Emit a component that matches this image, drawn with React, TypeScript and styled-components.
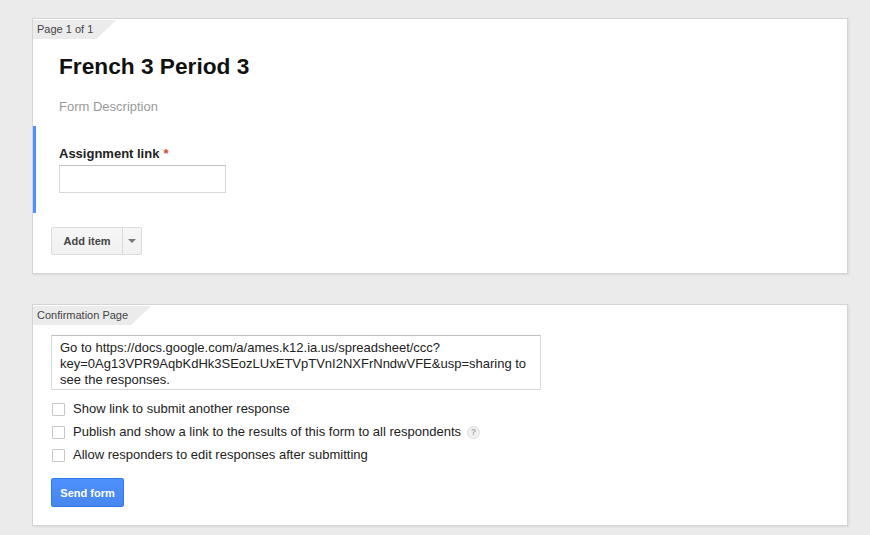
import React from "react";
import styled, { createGlobalStyle } from "styled-components";

const GlobalStyle = createGlobalStyle`
  html, body {
    margin: 0;
    padding: 0;
    background: #ebebeb;
    font-family: "Liberation Sans", Arial, sans-serif;
    color: #222;
  }
`;

const Page = styled.div`
  padding: 18px 0 9px 32px;
  display: flex;
  flex-direction: column;
  gap: 30px;
`;

const Card = styled.section`
  box-sizing: border-box;
  width: 816px;
  background: #fff;
  border: 1px solid #d4d4d4;
  box-shadow: 1px 1px 2px rgba(0, 0, 0, 0.08);
  padding-bottom: ${(p: { $bottom: number }) => p.$bottom}px;
`;

const Tab = styled.div`
  display: inline-block;
  height: 19px;
  line-height: 19px;
  padding: 0 23px 0 4px;
  font-size: 11px;
  color: #444;
  background: #ebebeb;
  clip-path: polygon(0 0, 100% 0, calc(100% - 20px) 100%, 0 100%);
`;

const Header = styled.div`
  padding: 13px 0 0 26px;
`;

const Title = styled.h1`
  margin: 0;
  font-size: 22.7px;
  line-height: 28px;
  font-weight: bold;
  color: #111;
`;

const Description = styled.div`
  margin-top: 19px;
  font-size: 13px;
  line-height: 16px;
  color: #999;
`;

const Item = styled.div`
  margin-top: 11px;
  border-left: 3px solid #4d90fe;
  padding: 20px 0 20px 23px;
`;

const Label = styled.div`
  font-size: 13px;
  line-height: 16px;
  font-weight: bold;
  color: #222;
`;

const Required = styled.span`
  color: #d14836;
  margin-left: 4px;
`;

const TextInput = styled.input`
  display: block;
  box-sizing: border-box;
  margin-top: 3px;
  width: 167px;
  height: 28px;
  border: 1px solid #d9d9d9;
  border-top-color: #c0c0c0;
  background: #fff;
  outline: none;
`;

const ButtonRow = styled.div`
  padding: 14px 0 0 18px;
  display: flex;
`;

const SplitButton = styled.div`
  display: flex;
  height: 28px;
  border: 1px solid #dcdcdc;
  border-radius: 2px;
  background: linear-gradient(#f6f6f6, #f1f1f1);
  box-sizing: border-box;
`;

const GrayButton = styled.button`
  border: none;
  background: transparent;
  font-family: inherit;
  font-size: 11px;
  font-weight: bold;
  color: #444;
  padding: 0 11px 0 11px;
  width: 70px;
  cursor: pointer;
`;

const ArrowPart = styled.div`
  width: 18px;
  border-left: 1px solid #dcdcdc;
  display: flex;
  align-items: center;
  justify-content: center;

  &::after {
    content: "";
    border-left: 4px solid transparent;
    border-right: 4px solid transparent;
    border-top: 4px solid #777;
  }
`;

const ConfirmBody = styled.div`
  padding: 10px 0 0 18px;
`;

const MessageBox = styled.div`
  box-sizing: border-box;
  width: 490px;
  height: 55px;
  padding: 4px 8px 0 8px;
  border: 1px solid #d9d9d9;
  border-top-color: #c0c0c0;
  font-size: 13px;
  line-height: 16px;
  color: #222;
  white-space: pre-line;
`;

const Options = styled.div`
  margin-top: 11px;
  display: flex;
  flex-direction: column;
  gap: 7px;
`;

const OptionRow = styled.label`
  display: flex;
  align-items: center;
  font-size: 13px;
  line-height: 16px;
  color: #222;
`;

const Box = styled.span`
  box-sizing: border-box;
  width: 13px;
  height: 13px;
  margin: 0 8px 0 1px;
  border: 1px solid #c6c6c6;
  border-radius: 1px;
  background: #fff;
`;

const Help = styled.span`
  box-sizing: border-box;
  display: inline-flex;
  align-items: center;
  justify-content: center;
  width: 13px;
  height: 13px;
  margin-left: 6px;
  border-radius: 50%;
  border: 1px solid #ddd;
  background: #f1f1f1;
  color: #aaa;
  font-size: 9px;
  font-weight: bold;
`;

const SendButton = styled.button`
  margin-top: 15px;
  box-sizing: border-box;
  height: 29px;
  width: 73px;
  border: 1px solid #3079ed;
  border-radius: 2px;
  background: linear-gradient(#4d90fe, #4787ed);
  color: #fff;
  font-family: inherit;
  font-size: 11px;
  font-weight: bold;
  cursor: pointer;
`;

const message =
  "Go to https://docs.google.com/a/ames.k12.ia.us/spreadsheet/ccc?\nkey=0Ag13VPR9AqbKdHk3SEozLUxETVpTVnI2NXFrNndwVFE&usp=sharing to\nsee the responses.";

const App = () => {
  return (
    <>
      <GlobalStyle />
      <Page>
        <Card $bottom={18}>
          <Tab>Page 1 of 1</Tab>
          <Header>
            <Title>French 3 Period 3</Title>
            <Description>Form Description</Description>
          </Header>
          <Item>
            <Label>
              Assignment link<Required>*</Required>
            </Label>
            <TextInput type="text" />
          </Item>
          <ButtonRow>
            <SplitButton>
              <GrayButton>Add item</GrayButton>
              <ArrowPart />
            </SplitButton>
          </ButtonRow>
        </Card>
        <Card $bottom={18}>
          <Tab>Confirmation Page</Tab>
          <ConfirmBody>
            <MessageBox>{message}</MessageBox>
            <Options>
              <OptionRow>
                <Box />
                Show link to submit another response
              </OptionRow>
              <OptionRow>
                <Box />
                Publish and show a link to the results of this form to all respondents
                <Help>?</Help>
              </OptionRow>
              <OptionRow>
                <Box />
                Allow responders to edit responses after submitting
              </OptionRow>
            </Options>
            <SendButton>Send form</SendButton>
          </ConfirmBody>
        </Card>
      </Page>
    </>
  );
};

export default App;
